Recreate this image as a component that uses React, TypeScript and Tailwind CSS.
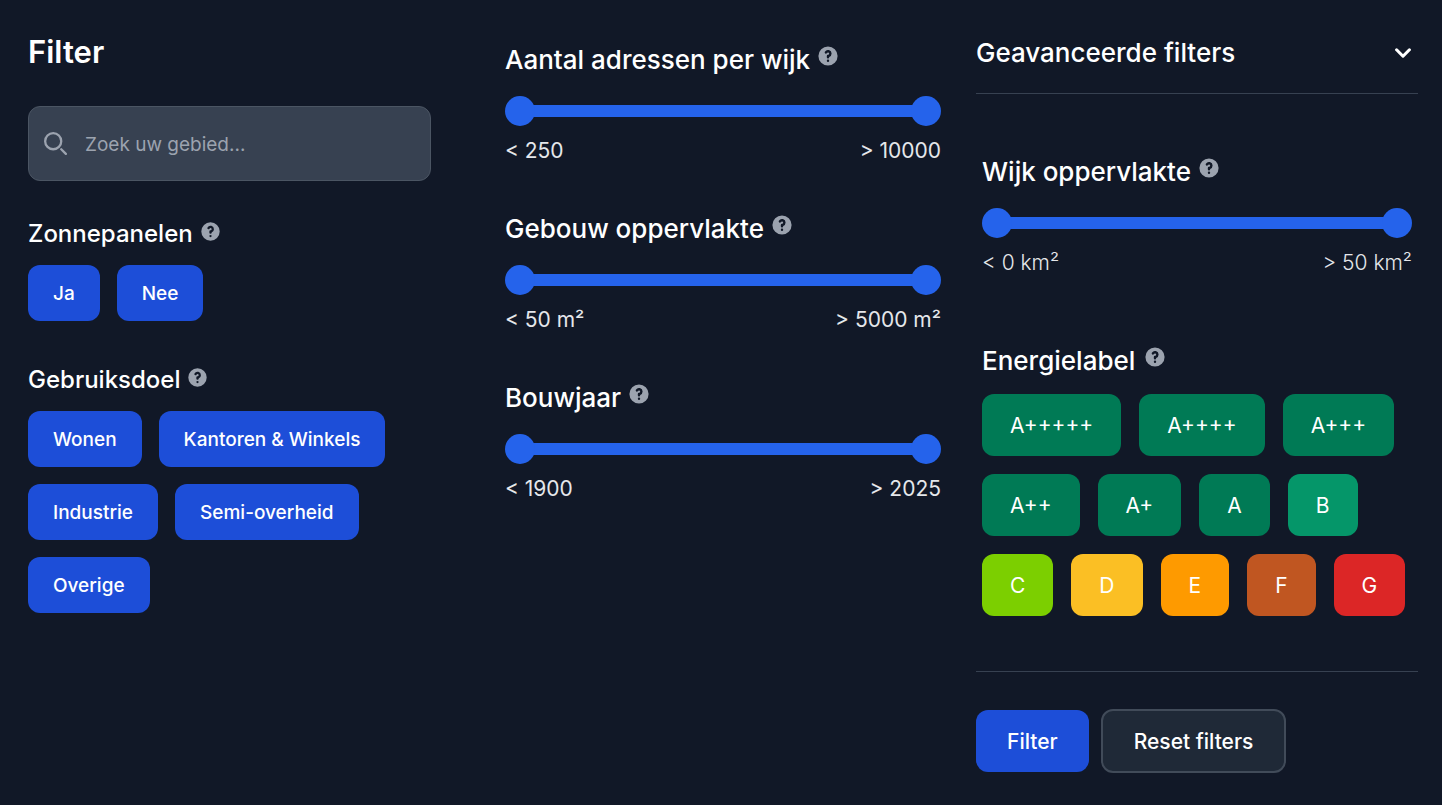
import { useId, useState } from "react";

function HelpIcon({ small }: { small?: boolean }) {
  return (
    <button type="button" className={small ? "shrink-0 pt-0.5 text-[#9ca3af]" : "shrink-0 text-[#9ca3af]"} aria-label="Uitleg">
      <svg className={small ? "size-[23px]" : "size-6"} viewBox="0 0 20 20" fill="currentColor" aria-hidden="true">
        <path
          fillRule="evenodd"
          clipRule="evenodd"
          d="M18 10a8 8 0 11-16 0 8 8 0 0116 0zm-8-3a1 1 0 00-.867.5 1 1 0 11-1.731-1A3 3 0 0113 8a3.001 3.001 0 01-2 2.83V11a1 1 0 11-2 0v-1a1 1 0 011-1 1 1 0 100-2zm0 8a1 1 0 100-2 1 1 0 000 2z"
        />
      </svg>
    </button>
  );
}

function RangeFilter({ title, low, high, light }: { title: string; low: string; high: string; light?: boolean }) {
  const id = useId();
  const [min, setMin] = useState(0);
  const [max, setMax] = useState(100);
  const thumb =
    "pointer-events-none col-start-1 row-start-1 h-[30px] w-full appearance-none bg-transparent [&::-webkit-slider-thumb]:pointer-events-auto [&::-webkit-slider-thumb]:size-[30px] [&::-webkit-slider-thumb]:appearance-none [&::-webkit-slider-thumb]:rounded-full [&::-webkit-slider-thumb]:bg-[#2563eb]";
  return (
    <section aria-labelledby={id}>
      <div className="flex h-8 items-start gap-1.5">
        <h3 id={id} className="text-[26px] leading-8 font-medium">
          {title}
        </h3>
        <HelpIcon />
      </div>
      <div className="mt-5 grid items-center">
        <div className="col-start-1 row-start-1 mx-3 h-3 bg-[#374151]">
          <div className="h-full bg-[#2563eb]" style={{ marginLeft: `${min}%`, width: `${max - min}%` }} />
        </div>
        <input
          type="range"
          aria-label={`${title} minimum`}
          className={thumb}
          value={min}
          onChange={(e) => setMin(Math.min(Number(e.target.value), max))}
        />
        <input
          type="range"
          aria-label={`${title} maximum`}
          className={thumb}
          value={max}
          onChange={(e) => setMax(Math.max(Number(e.target.value), min))}
        />
      </div>
      <div
        className={
          light
            ? "mt-[9px] flex justify-between text-[21px] leading-8 font-light text-[#e5e7eb]"
            : "mt-[9px] flex justify-between text-[21px] leading-8 text-[#e5e7eb]"
        }
      >
        <span>{low}</span>
        <span>{high}</span>
      </div>
    </section>
  );
}

function ChipGroup({ title, options }: { title: string; options: string[] }) {
  return (
    <section>
      <div className="flex h-8 items-start gap-1.5">
        <h3 className="text-[24px] leading-8 font-medium">{title}</h3>
        <HelpIcon small />
      </div>
      <div className="mt-[15px] flex flex-wrap gap-[17px]">
        {options.map((label) => (
          <button
            key={label}
            type="button"
            className="h-14 rounded-xl bg-[#1d4ed8] px-[25px] pt-0.5 text-[19px] font-medium"
          >
            {label}
          </button>
        ))}
      </div>
    </section>
  );
}

const labels = [
  { name: "A+++++", color: "bg-[#007a55]" },
  { name: "A++++", color: "bg-[#007a55]" },
  { name: "A+++", color: "bg-[#007a55]" },
  { name: "A++", color: "bg-[#007a55]" },
  { name: "A+", color: "bg-[#007a55]" },
  { name: "A", color: "bg-[#007a55]" },
  { name: "B", color: "bg-[#059669]" },
  { name: "C", color: "bg-[#7ccf00]" },
  { name: "D", color: "bg-[#fbbf24]" },
  { name: "E", color: "bg-[#fe9a00]" },
  { name: "F", color: "bg-[#c05621]" },
  { name: "G", color: "bg-[#dc2626]" },
];

export default function App() {
  return (
    <main className="grid min-h-screen grid-cols-[477fr_471fr_442fr] bg-[#111827] pr-6 pl-7 font-['Inter',sans-serif] text-white">
      <div className="flex flex-col pt-8 pr-[74px]">
        <h2 className="text-[31px] leading-10 font-semibold">Filter</h2>
        <label className="mt-[34px] flex h-[75px] items-center gap-[18px] rounded-xl border border-[#4b5563] bg-[#374151] px-[15px]">
          <svg className="size-[23px] shrink-0 text-[#9ca3af]" viewBox="0 0 20 20" fill="none" aria-hidden="true">
            <path
              stroke="currentColor"
              strokeWidth="2"
              strokeLinecap="round"
              strokeLinejoin="round"
              d="m19 19-4-4m0-7A7 7 0 1 1 1 8a7 7 0 0 1 14 0Z"
            />
          </svg>
          <input
            type="text"
            aria-label="Zoek uw gebied"
            placeholder="Zoek uw gebied..."
            className="h-full min-w-0 flex-1 bg-transparent pt-0.5 text-[19px] outline-none placeholder:text-[#9ca3af]"
          />
        </label>
        <div className="mt-[37px] flex flex-col gap-[43px]">
          <ChipGroup title="Zonnepanelen" options={["Ja", "Nee"]} />
          <ChipGroup
            title="Gebruiksdoel"
            options={["Wonen", "Kantoren & Winkels", "Industrie", "Semi-overheid", "Overige"]}
          />
        </div>
      </div>

      <div className="flex flex-col gap-[46px] pt-11 pr-[35px]">
        <RangeFilter title="Aantal adressen per wijk" low="< 250" high="> 10000" />
        <RangeFilter title="Gebouw oppervlakte" low="< 50 m²" high="> 5000 m²" />
        <RangeFilter title="Bouwjaar" low="< 1900" high="> 2025" />
      </div>

      <div className="flex flex-col">
        <button
          type="button"
          aria-expanded="true"
          className="flex h-[94px] items-center justify-between border-b border-[#374151] pt-3 pr-[7px] text-left text-[26px] font-medium"
        >
          Geavanceerde filters
          <svg className="h-2.5 w-4" viewBox="0 0 10 6" fill="none" aria-hidden="true">
            <path stroke="currentColor" strokeWidth="1.9" strokeLinecap="round" strokeLinejoin="round" d="m1 1 4 4 4-4" />
          </svg>
        </button>
        <div className="border-b border-[#374151] px-1.5 pt-[62px] pb-[55px]">
          <RangeFilter title="Wijk oppervlakte" low="< 0 km²" high="> 50 km²" light />
          <section className="mt-[66px]">
            <div className="flex h-8 items-start gap-2">
              <h3 className="text-[26px] leading-8 font-medium">Energielabel</h3>
              <HelpIcon />
            </div>
            <div className="mt-[17px] flex flex-wrap gap-[18px]">
              {labels.map(({ name, color }) => (
                <button key={name} type="button" className={`h-[62px] rounded-xl px-7 pt-0.5 text-[21px] ${color}`}>
                  {name}
                </button>
              ))}
            </div>
          </section>
        </div>
        <div className="flex items-center gap-3 pt-[37px]">
          <button type="submit" className="h-[62px] rounded-xl bg-[#1d4ed8] px-[31px] pt-0.5 text-[21px] font-medium">
            Filter
          </button>
          <button
            type="reset"
            className="h-16 rounded-xl border-2 border-[#414b59] bg-[#1f2937] px-[31px] pt-0.5 text-[21px] font-medium"
          >
            Reset filters
          </button>
        </div>
      </div>
    </main>
  );
}
